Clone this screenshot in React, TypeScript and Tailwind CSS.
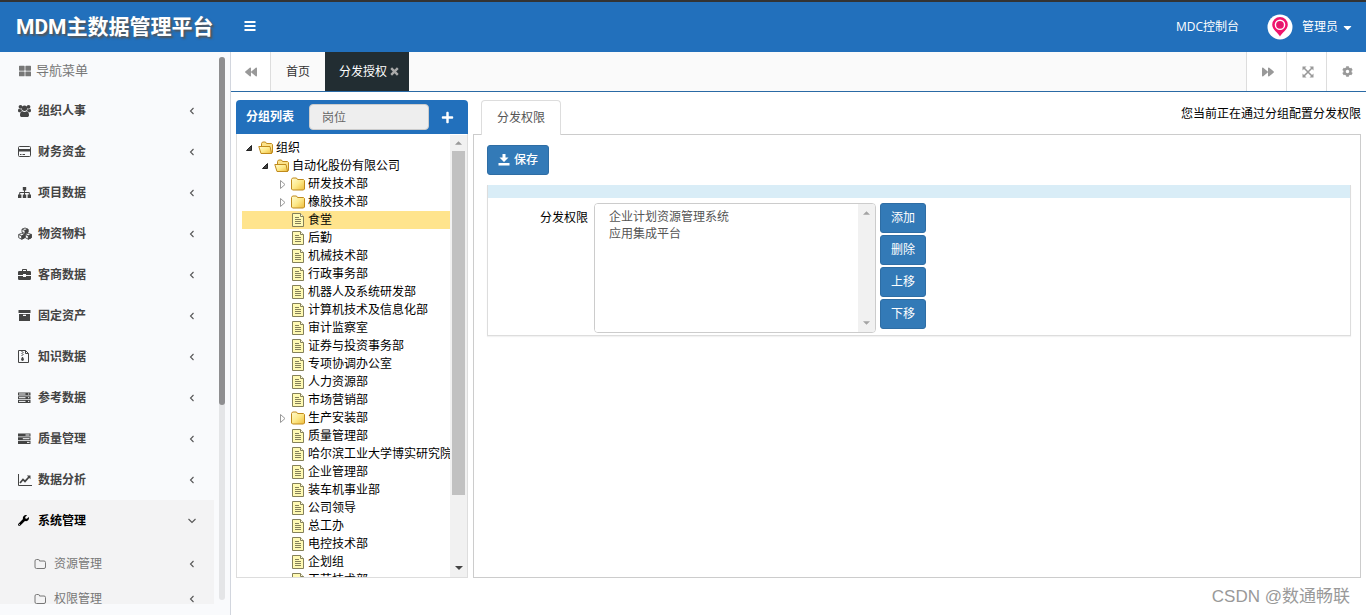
import React from 'react';
import { FaBackward, FaCaretDown, FaCog, FaForward, FaPlus, FaThLarge, FaWrench } from 'react-icons/fa';

type Glyph =
  | 'users' | 'card' | 'sitemap' | 'cubes' | 'briefcase' | 'archive' | 'zip' | 'server' | 'tasks' | 'chart';

const glyphs: Record<Glyph, React.ReactNode> = {
  users: (
    <g fill="currentColor">
      <circle cx="2.500" cy="2.800" r="1.900" />
      <circle cx="10.500" cy="2.800" r="1.900" />
      <circle cx="6.500" cy="4.300" r="2.700" />
      <path d="M0 6.800C0 5.200.6 4.700 1.200 4.700c.8.600 1.600.6 2.200.3 0 1 .3 1.700.9 2.300-1 0-1.600.4-2 .900H1C.4 8.200 0 7.700 0 6.800zM13 6.800c0-1.600-.6-2.100-1.200-2.100-.8.600-1.600.6-2.200.3 0 1-.3 1.700-.9 2.300 1 0 1.600.4 2 .900H12c.6 0 1-.5 1-1.400z" />
      <path d="M4.300 7.200c1.300 1 3.100 1 4.400 0 1.700.2 2.300 1.900 2.300 3.700 0 1.300-.7 2.100-1.800 2.100H3.800C2.700 13 2 12.200 2 10.900c0-1.800.6-3.500 2.300-3.700z" />
    </g>
  ),
  card: (
    <>
      <rect x="0.500" y="1.500" width="12" height="10" rx="1" fill="none" stroke="currentColor" />
      <path d="M0 4h13v2.500H0zM2 9h1.500v1H2zM4.500 9H7v1H4.500z" fill="currentColor" />
    </>
  ),
  sitemap: (
    <>
      <path d="M4.800 1h3.400v3.600H4.800zM0 8.400h3.400V12H0zM4.800 8.400h3.400V12H4.800zM9.600 8.400H13V12H9.600z" fill="currentColor" />
      <path d="M6.500 4v5M1.700 9V6.500h9.600V9" fill="none" stroke="currentColor" />
    </>
  ),
  cubes: (
    <g fill="none" stroke="currentColor" strokeWidth="0.900" strokeLinejoin="round">
      <path d="M7 1l3 1.200v3L7 6.600l-3-1.400v-3zM4 2.200l3 1.300 3-1.300" />
      <path d="M3.700 6.300l3 1.200v3.200l-3 1.500-3-1.500V7.500zM.7 7.500l3 1.400 3-1.400" />
      <path d="M10.300 6.300l3 1.200v3.200l-3 1.500-3-1.500V7.500zM7.300 7.500l3 1.400 3-1.400" />
      <path d="M7 3.500l3-1.300v3L7 6.600zM3.700 8.900l3-1.400v3.200l-3 1.500zM10.300 8.900l3-1.400v3.200l-3 1.500z" fill="currentColor" />
    </g>
  ),
  briefcase: (
    <path
      d="M4 3V1.800q0-.8.800-.8h3.400q.8 0 .8.800V3h2.800Q13 3 13 4.200V7H8V6H5v1H0V4.200Q0 3 1.200 3zM5 3h3V2H5zM0 8h5v1h3V8h5v2.800q0 1.200-1.200 1.200H1.200Q0 12 0 10.800z"
      fill="currentColor"
      fillRule="evenodd"
    />
  ),
  archive: (
    <path d="M.5 1h12v3H.5zM1 5h11v7H1zM5 5.800v1.200h3V5.800z" fill="currentColor" fillRule="evenodd" />
  ),
  zip: (
    <g fill="none" stroke="currentColor">
      <path d="M.5.500h7l3 3v9H.5z" />
      <path d="M7.500.500v3h3" />
      <path d="M4 1v1M5 2v1M4 3v1M5 4v1M4 5v1" />
      <path d="M4.500 7l-1 2.500q0 1 1 1t1-1z" fill="currentColor" />
    </g>
  ),
  server: (
    <>
      <path d="M0 1.500h12.500v3H0zM0 5.200h12.500v3H0zM0 8.900h12.500v3H0z" fill="currentColor" />
      <path d="M1 3h6.500M1 6.700h6.500M1 10.400h6.500M10 3h1.200M10 6.700h1.200M10 10.400h1.200" stroke="#f9fafc" />
    </>
  ),
  tasks: (
    <>
      <path d="M0 1.500h12.500v3H0zM0 5.200h12.500v3H0zM0 8.900h12.500v3H0z" fill="currentColor" />
      <path d="M7.500 3h4M4.800 6.700h6.700M9 10.400h2.500" stroke="#f9fafc" />
    </>
  ),
  chart: (
    <g fill="none" stroke="currentColor">
      <path d="M.5 1v11.500H14" />
      <path d="M2 10l3-3.600 2 2L11 4" strokeWidth="1.700" />
      <path d="M8.800 2.500h3.700v3.700z" fill="currentColor" stroke="none" />
    </g>
  ),
};

const menu: { label: string; glyph: Glyph }[] = [
  { label: '组织人事', glyph: 'users' },
  { label: '财务资金', glyph: 'card' },
  { label: '项目数据', glyph: 'sitemap' },
  { label: '物资物料', glyph: 'cubes' },
  { label: '客商数据', glyph: 'briefcase' },
  { label: '固定资产', glyph: 'archive' },
  { label: '知识数据', glyph: 'zip' },
  { label: '参考数据', glyph: 'server' },
  { label: '质量管理', glyph: 'tasks' },
  { label: '数据分析', glyph: 'chart' },
];

type Kind = 'open' | 'closed' | 'leaf';
type Node = { label: string; kind: Kind; level: 0 | 1 | 2; selected?: boolean };

const leaf = (label: string): Node => ({ label, kind: 'leaf', level: 2 });

const tree: Node[] = [
  { label: '组织', kind: 'open', level: 0 },
  { label: '自动化股份有限公司', kind: 'open', level: 1 },
  { label: '研发技术部', kind: 'closed', level: 2 },
  { label: '橡胶技术部', kind: 'closed', level: 2 },
  { label: '食堂', kind: 'leaf', level: 2, selected: true },
  leaf('后勤'),
  leaf('机械技术部'),
  leaf('行政事务部'),
  leaf('机器人及系统研发部'),
  leaf('计算机技术及信息化部'),
  leaf('审计监察室'),
  leaf('证券与投资事务部'),
  leaf('专项协调办公室'),
  leaf('人力资源部'),
  leaf('市场营销部'),
  { label: '生产安装部', kind: 'closed', level: 2 },
  leaf('质量管理部'),
  leaf('哈尔滨工业大学博实研究院'),
  leaf('企业管理部'),
  leaf('装车机事业部'),
  leaf('公司领导'),
  leaf('总工办'),
  leaf('电控技术部'),
  leaf('企划组'),
  leaf('工艺技术部'),
];

const indent = ['pl-0', 'pl-4', 'pl-8'];

function Chevron({ down }: { down?: boolean }) {
  return (
    <svg className="ml-auto size-3 text-[#555]" viewBox="0 0 12 12" fill="none" aria-hidden="true">
      <path d={down ? 'M2.500 4L6 7.500 9.500 4' : 'M7.500 3L4.500 6l3 3'} stroke="currentColor" strokeWidth="1.100" />
    </svg>
  );
}

function Toggle({ kind }: { kind: Kind }) {
  return (
    <svg className="h-[18px] w-4 shrink-0" viewBox="0 0 16 18" aria-hidden="true">
      {kind === 'open' && <path d="M9.500 6.500v5h-5z" fill="#444" stroke="#222" strokeWidth="1" />}
      {kind === 'closed' && <path d="M6.500 5.500v8l4.500-4z" fill="#fff" stroke="#999" strokeWidth="1" />}
    </svg>
  );
}

function NodeIcon({ kind }: { kind: Kind }) {
  return (
    <svg className="h-[18px] w-4 shrink-0" viewBox="0 0 16 18" aria-hidden="true">
      <defs>
        <linearGradient id="folder" x1="0" y1="0" x2="1" y2="1">
          <stop offset="0" stopColor="#fffbd0" />
          <stop offset="0.5" stopColor="#fde98a" />
          <stop offset="1" stopColor="#eebc3c" />
        </linearGradient>
      </defs>
      {kind === 'leaf' && (
        <>
          <path d="M2.500 2.500h8l3 3v10h-11z" fill="#fffab4" stroke="#85815a" />
          <path d="M10.500 2.500v3h3" fill="#fffde0" stroke="#85815a" />
          <path d="M5 6.500h4M5 8.500h6M5 10.500h6M5 12.500h6" stroke="#85815a" />
        </>
      )}
      {kind === 'closed' && (
        <path d="M1.500 4.500l1-1.500h4l1 1.500h6l1 1v8.500l-1 1h-11l-1-1z" fill="url(#folder)" stroke="#c08a1c" />
      )}
      {kind === 'open' && (
        <>
          <path d="M3.500 13.500v-9l1-1.500h3l1 1.500h5l1 1v8l-1 1h-10z" fill="#fbe28a" stroke="#c08a1c" />
          <path d="M.8 7.500h11.200l1.600 7h-10.600z" fill="url(#folder)" stroke="#c08a1c" />
        </>
      )}
    </svg>
  );
}

function Arrow({ up, className }: { up?: boolean; className: string }) {
  return (
    <svg className={className} viewBox="0 0 8 4" aria-hidden="true">
      <path d={up ? 'M0 4h8L4 0z' : 'M0 0h8L4 4z'} fill="currentColor" />
    </svg>
  );
}

function Header() {
  return (
    <header className="flex h-[52px] shrink-0 items-center border-t-2 border-[#333] bg-[#2270bc] text-white">
      <h1 className="w-[230px] shrink-0 pl-4 font-['Roboto','Noto_Sans_CJK_SC',sans-serif] text-[21px] leading-none font-bold [text-shadow:2px_2px_2px_#555]">
        MDM主数据管理平台
      </h1>
      <button type="button" aria-label="切换菜单" className="px-[14px] py-2">
        <svg className="size-3" viewBox="0 0 12 12" aria-hidden="true">
          <path d="M.5 0h11v2H.5zM.5 4h11v2H.5zM.5 8h11v2H.5z" fill="currentColor" />
        </svg>
      </button>
      <a href="#console" className="ml-auto">MDC控制台</a>
      <button type="button" className="mr-3 ml-7 flex items-center">
        <svg className="size-[26px]" viewBox="0 0 26 26" aria-hidden="true">
          <circle cx="13" cy="13" r="12.500" fill="#fff" />
          <path d="M13 22.500C11.500 19 5.200 16 5.200 10.800a7.800 7.800 0 0 1 15.600 0C20.800 16 14.500 19 13 22.500z" fill="#f0146e" />
          <circle cx="13" cy="10.800" r="4.600" fill="none" stroke="#fff" strokeWidth="1.400" />
          <circle cx="13" cy="10.800" r="2.600" fill="#e0186c" />
        </svg>
        <span className="ml-[9px]">管理员</span>
        <FaCaretDown className="ml-[3px] size-[13px]" />
      </button>
    </header>
  );
}

function Sidebar() {
  return (
    <nav className="flex w-[231px] shrink-0 overflow-hidden border-r border-[#d2d6de] bg-[#f9fafc] pb-[11px]">
      <div className="w-[214px] shrink-0 overflow-hidden">
        <div className="flex h-[38px] items-center pl-[19px] text-[13px] text-[#777]">
          <FaThLarge className="mr-[5px] size-3" />
          导航菜单
        </div>
        <ul>
          {menu.map(({ label, glyph }) => (
            <li key={label}>
              <a href="#menu" className="flex h-[41px] items-center pr-4 pl-[18px] font-bold text-[#444]">
                <span className="w-5">
                  <svg className="h-[13px] w-[14px]" viewBox="0 0 14 13" aria-hidden="true">{glyphs[glyph]}</svg>
                </span>
                {label}
                <Chevron />
              </a>
            </li>
          ))}
          <li className="bg-[#f3f3f4] pb-2">
            <a href="#menu" className="flex h-[41px] items-center pr-4 pl-[18px] font-bold text-black">
              <span className="w-5"><FaWrench className="size-[11px]" /></span>
              系统管理
              <Chevron down />
            </a>
            <ul className="pt-[5px]">
              {['资源管理', '权限管理'].map((label) => (
                <li key={label}>
                  <a href="#menu" className="flex h-[35px] items-center pr-4 pl-[34px] text-[#777]">
                    <span className="w-5">
                      <svg className="size-3" viewBox="0 0 12 12" fill="none" aria-hidden="true">
                        <path d="M1 3q0-1.500 1.500-1.500h2Q5.500 1.500 5.500 3h4.500q1.500 0 1.500 1.500V9q0 1.500-1.500 1.500H2.500Q1 10.500 1 9z" stroke="currentColor" />
                      </svg>
                    </span>
                    {label}
                    <Chevron />
                  </a>
                </li>
              ))}
            </ul>
          </li>
        </ul>
      </div>
      <div className="mt-[5px] mb-1 ml-[5px] w-[6px] rounded-full bg-[#e4e5e7]">
        <div className="h-[64%] rounded-full bg-[#8e8e90]" />
      </div>
    </nav>
  );
}

function TabBar() {
  const tool = 'flex w-10 items-center justify-center border-l border-[#ddd] bg-white pl-[2px] text-[#999]';
  return (
    <div className="flex h-10 shrink-0 border-b border-[#2a6aa5] bg-[#fafafa]">
      <button type="button" aria-label="向左" className="flex w-10 items-center justify-center border-r border-[#ddd] bg-white text-[#999]">
        <FaBackward className="size-3" />
      </button>
      <a href="#home" className="flex w-[54px] items-center justify-center text-[#333]">首页</a>
      <div className="flex w-[84px] items-center justify-center bg-[#222d32] pl-1 text-white">
        <a href="#auth">分发授权</a>
        <button type="button" aria-label="关闭" className="ml-[3px] text-[#aaa]">
          <svg className="size-[9px]" viewBox="0 0 9 9" aria-hidden="true">
            <path d="M1.200 1.200l6.600 6.600M7.800 1.200L1.200 7.800" stroke="currentColor" strokeWidth="2.400" />
          </svg>
        </button>
      </div>
      <div className="ml-auto flex">
        <button type="button" aria-label="向右" className={tool}><FaForward className="size-3" /></button>
        <button type="button" aria-label="全屏" className={tool}>
          <svg className="size-3" viewBox="0 0 12 12" aria-hidden="true">
            <path d="M.5.500h4l-4 4zM11.500.500v4l-4-4zM.5 11.500v-4l4 4zM11.500 11.500h-4l4-4z" fill="currentColor" />
            <path d="M2 2l8 8M10 2l-8 8" stroke="currentColor" strokeWidth="1.600" />
          </svg>
        </button>
        <button type="button" aria-label="设置" className={tool}><FaCog className="size-[11px]" /></button>
      </div>
    </div>
  );
}

function GroupPanel() {
  return (
    <section className="flex w-[232px] shrink-0 flex-col">
      <div className="flex h-[34px] shrink-0 items-center rounded-t bg-[#2270bc] pl-[10px] text-white">
        <label htmlFor="group" className="w-[63px] font-bold">分组列表</label>
        <input
          id="group"
          defaultValue="岗位"
          className="h-[26px] w-[120px] rounded border border-[#ccc] bg-[#eee] px-3 text-[#666]"
        />
        <button type="button" aria-label="新增" className="ml-3"><FaPlus className="size-[13px]" /></button>
      </div>
      <div className="flex min-h-0 flex-1 border border-t-0 border-[#ddd] pl-[5px]">
        <ul className="h-full min-w-0 flex-1 overflow-hidden pt-[5px] whitespace-nowrap text-black">
          {tree.map((node) => (
            <li key={node.label} className={node.selected ? 'bg-[#ffe48d]' : ''}>
              <a href="#node" className={`flex h-[18px] items-center ${indent[node.level]}`}>
                <Toggle kind={node.kind} />
                <NodeIcon kind={node.kind} />
                <span className="ml-[2px]">{node.label}</span>
              </a>
            </li>
          ))}
        </ul>
        <div className="mt-[1px] flex w-[17px] shrink-0 flex-col items-center bg-[#f1f1f1]">
          <Arrow up className="my-[6px] h-1 w-[7px] shrink-0 text-[#999]" />
          <div className="h-[344px] w-[13px] bg-[#c1c1c1]" />
          <Arrow className="mt-auto mb-[7px] h-1 w-2 shrink-0 text-[#444]" />
        </div>
      </div>
    </section>
  );
}

function AuthPanel() {
  const primary = 'flex h-[30px] items-center justify-center rounded-[3px] border border-[#2e6da4] bg-[#337ab7] text-white';
  return (
    <section className="ml-[5px] flex min-w-0 flex-1 flex-col">
      <div className="flex h-[34px] shrink-0 items-start pl-2">
        <a href="#tab" className="relative z-10 flex h-[35px] w-20 items-center justify-center rounded-t border border-b-0 border-[#ddd] bg-white text-[#555]">
          分发权限
        </a>
        <p className="mt-[6px] ml-auto text-black">您当前正在通过分组配置分发权限</p>
      </div>
      <div className="flex-1 border border-[#ccc] pt-[10px] pr-[9px] pl-[13px]">
        <button type="button" className={`${primary} w-[62px] gap-1`}>
          <svg className="size-3" viewBox="0 0 12 12" aria-hidden="true">
            <path d="M4.500 0h3v3.500h3L6 8 1.500 3.500h3zM.5 9h11v2.500H.5z" fill="currentColor" />
          </svg>
          <span className="font-medium">保存</span>
        </button>
        <div className="mt-[10px] border border-t-0 border-[#ddd] shadow-[0_1px_1px_rgba(0,0,0,0.05)]">
          <div className="h-[13px] bg-[#d9edf7]" />
          <div className="flex items-start pt-[5px] pb-[2px]">
            <label htmlFor="auth" className="w-[100px] pt-[7px] text-right text-black">分发权限</label>
            <div className="ml-[6px] flex h-[130px] w-[282px] overflow-hidden rounded border border-[#ccc]">
              <select
                id="auth"
                multiple
                className="h-full min-w-0 flex-1 appearance-none overflow-hidden bg-white py-[3px] pl-[14px] text-[#555] outline-none [scrollbar-width:none]"
              >
                <option className="h-[17px] p-0 leading-[17px]">企业计划资源管理系统</option>
                <option className="h-[17px] p-0 leading-[17px]">应用集成平台</option>
              </select>
              <div className="flex w-[17px] shrink-0 flex-col items-center justify-between bg-[#f1f1f1] py-[7px] text-[#a3a3a3]">
                <Arrow up className="h-1 w-[7px]" />
                <Arrow className="h-1 w-[7px]" />
              </div>
            </div>
            <div className="ml-1 flex flex-col gap-[2px]">
              {['添加', '删除', '上移', '下移'].map((label) => (
                <button key={label} type="button" className={`${primary} w-[46px]`}>{label}</button>
              ))}
            </div>
          </div>
        </div>
      </div>
    </section>
  );
}

export default function App() {
  return (
    <div className="relative flex h-screen flex-col overflow-hidden bg-white font-['Open_Sans','Noto_Sans_CJK_SC',sans-serif] text-xs">
      <Header />
      <div className="flex min-h-0 flex-1">
        <Sidebar />
        <div className="flex min-w-0 flex-1 flex-col">
          <TabBar />
          <main className="flex min-h-0 flex-1 pt-2 pr-[5px] pb-[37px] pl-[5px]">
            <GroupPanel />
            <AuthPanel />
          </main>
        </div>
      </div>
      <div className="pointer-events-none absolute right-4 bottom-1 font-['Liberation_Sans','Noto_Sans_CJK_SC',sans-serif] text-[17px] leading-7 text-[#999]">
        CSDN @数通畅联
      </div>
    </div>
  );
}
